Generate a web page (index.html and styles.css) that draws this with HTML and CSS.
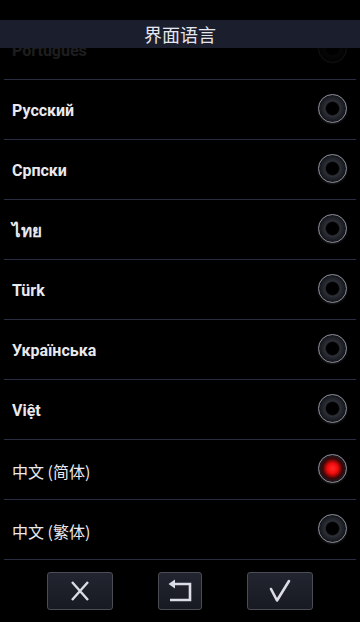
FILE: index.html
```html
<!DOCTYPE html>
<html>
<head>
<meta charset="utf-8">
<link rel="stylesheet" href="styles.css">
</head>
<body>
<div class="screen">
  <div class="title">界面语言</div>
  <div class="list">
    <div class="row faded"><span class="label">Português</span><span class="radio"></span></div>
    <div class="row"><span class="label">Русский</span><span class="radio"></span></div>
    <div class="row"><span class="label">Српски</span><span class="radio"></span></div>
    <div class="row"><span class="label thai">ไทย</span><span class="radio"></span></div>
    <div class="row"><span class="label">Türk</span><span class="radio"></span></div>
    <div class="row"><span class="label">Українська</span><span class="radio"></span></div>
    <div class="row"><span class="label">Việt</span><span class="radio"></span></div>
    <div class="row"><span class="label cjk">中文 (简体)</span><span class="radio on"></span></div>
    <div class="row"><span class="label cjk">中文 (繁体)</span><span class="radio"></span></div>
  </div>
  <div class="bar">
    <div class="btn wide">
      <svg width="20" height="20" viewBox="0 0 20 20"><path d="M2 1 L18 19 M18 1 L2 19" stroke="#dcdce6" stroke-width="2.4" fill="none"/></svg>
    </div>
    <div class="btn narrow">
      <svg width="26" height="24" viewBox="0 0 26 24"><path d="M7 5 H23 V21 H3" stroke="#dcdce6" stroke-width="2.6" fill="none"/><path d="M1.5 5 L8 0.5 V9.5 Z" fill="#dcdce6"/></svg>
    </div>
    <div class="btn wide">
      <svg width="24" height="24" viewBox="0 0 24 24"><path d="M3 10 L9 21.5 L21 2" stroke="#dcdce6" stroke-width="2.6" fill="none" stroke-linecap="round" stroke-linejoin="round"/></svg>
    </div>
  </div>
</div>
</body>
</html>
```
FILE: styles.css
```css
html, body {
  margin: 0;
  padding: 0;
  background: #000;
}
.screen {
  position: relative;
  width: 360px;
  height: 622px;
  overflow: hidden;
  background: #000;
  font-family: Roboto, "Noto Sans", "Noto Sans CJK SC", sans-serif;
}
.title {
  position: absolute;
  left: 0;
  top: 20px;
  width: 360px;
  height: 28px;
  background: #1b1e2d;
  color: #e6e6ee;
  font-family: "Noto Sans CJK SC", sans-serif;
  font-size: 18px;
  line-height: 28px;
  text-align: center;
  z-index: 2;
}
.list {
  padding-top: 20px;
}
.row {
  height: 59px;
  margin: 0 4px;
  border-bottom: 1px solid #2a2d42;
  display: flex;
  align-items: center;
  justify-content: space-between;
  padding: 2px 9px 0 8px;
  box-sizing: border-box;
  height: 60px;
}
.row.faded .label, .row.faded .radio {
  opacity: 0.12;
}
.label {
  color: #e9e9ef;
  font-size: 16px;
  font-weight: bold;
}
.label.cjk {
  font-family: "Noto Sans CJK SC", sans-serif;
  font-weight: normal;
  font-size: 16px;
}
.label.thai {
  font-family: "DejaVu Sans", "Noto Sans", sans-serif;
  font-weight: bold;
  font-size: 17px;
  color: #e9e9ef;
}
.radio {
  width: 27px;
  height: 27px;
  margin-top: -4px;
  border-radius: 50%;
  border: 1px solid #8f929e;
  background: radial-gradient(circle at 50% 50%, #000 0, #000 6px, #2e3038 7.5px, #22242b 10px, #121318 14px);
  box-shadow: 0 1px 2px rgba(255,255,255,0.12);
}
.radio.on {
  background: radial-gradient(circle at 50% 50%, #ff2a2a 0, #f20c0c 5px, #b00808 7px, #3a0808 10px, #1a1a20 14px);
}
.bar {
  display: flex;
  justify-content: center;
  align-items: flex-start;
  gap: 45px;
  padding-top: 12px;
}
.btn {
  height: 36px;
  border: 1px solid #4a4d56;
  border-radius: 3px;
  background: linear-gradient(#22252f, #181a22);
  display: flex;
  align-items: center;
  justify-content: center;
}
.btn.wide {
  width: 64px;
}
.btn.narrow {
  width: 42px;
}
```
